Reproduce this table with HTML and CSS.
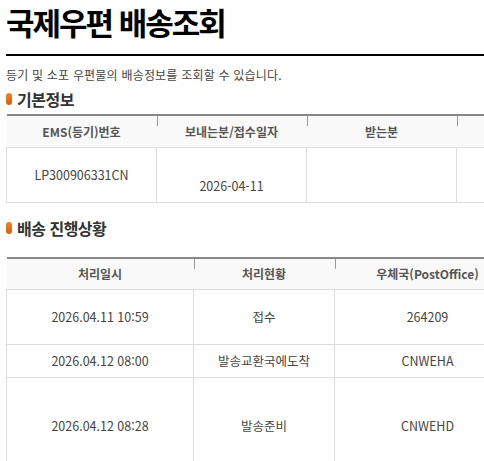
FILE: index.html
```html
<!DOCTYPE html>
<html lang="ko">
<head>
<meta charset="utf-8">
<title>국제우편 배송조회</title>
<link rel="stylesheet" href="styles.css">
</head>
<body>
<div class="page">
  <h1 class="title">국제우편 배송조회</h1>
  <p class="desc">등기 및 소포 우편물의 배송정보를 조회할 수 있습니다.</p>

  <h2 class="sec"><span class="pill"></span>기본정보</h2>
  <table class="grid basic">
    <colgroup><col class="b1"><col class="b2"><col class="b3"><col class="b4"></colgroup>
    <thead>
      <tr><th>EMS(등기)번호</th><th>보내는분/접수일자</th><th>받는분</th><th></th></tr>
    </thead>
    <tbody>
      <tr class="r-basic"><td>LP300906331CN</td><td><br>2026-04-11</td><td></td><td></td></tr>
    </tbody>
  </table>

  <h2 class="sec sec2"><span class="pill"></span>배송 진행상황</h2>
  <table class="grid progress">
    <colgroup><col class="p1"><col class="p2"><col class="p3"><col class="p4"></colgroup>
    <thead>
      <tr><th>처리일시</th><th>처리현황</th><th>우체국(PostOffice)</th><th></th></tr>
    </thead>
    <tbody>
      <tr class="r-a"><td>2026.04.11 10:59</td><td>접수</td><td>264209</td><td></td></tr>
      <tr class="r-b"><td>2026.04.12 08:00</td><td>발송교환국에도착</td><td>CNWEHA</td><td></td></tr>
      <tr class="r-c"><td>2026.04.12 08:28</td><td>발송준비</td><td>CNWEHD</td><td></td></tr>
    </tbody>
  </table>
</div>
</body>
</html>
```

FILE: styles.css
```css
* { box-sizing: border-box; }
html, body { margin: 0; padding: 0; background: #fff; }
body {
  font-family: "Noto Sans CJK KR", "Noto Sans", sans-serif;
  color: #444;
  overflow: hidden;
}
.page {
  padding-left: 6px;
  width: 484px;
  height: 461px;
  overflow: hidden;
}
.title {
  margin: 0;
  font-size: 31px;
  line-height: 44px;
  letter-spacing: -2px;
  font-weight: 700;
  color: #000;
  padding: 0 0 10px 0;
  border-bottom: 2px solid #000;
  width: 478px;
}
.desc {
  margin: 10px 0 0 0;
  font-size: 12px;
  line-height: 18px;
  letter-spacing: 0.2px;
  color: #444;
}
.sec {
  margin: 4px 0 4px 0;
  font-size: 16px;
  line-height: 22px;
  letter-spacing: -0.5px;
  font-weight: 700;
  color: #333;
  display: flex;
  align-items: center;
  gap: 5px;
}
.sec2 { margin: 14px 0 18px 0; }
.pill {
  display: inline-block;
  width: 6px;
  height: 12px;
  border-radius: 3px;
  background: linear-gradient(#f3832a, #dd5c05);
}
.grid {
  border-collapse: collapse;
  table-layout: fixed;
  border-top: 2px solid #888;
  font-size: 12.5px;
}
.grid th {
  height: 32px;
  padding: 0;
  background: #f9f9f9;
  font-size: 12px;
  font-weight: 700;
  color: #555;
  text-align: center;
  border-bottom: 1px solid #ddd;
}
.grid th + th {
  background: linear-gradient(#999, #999) left top / 1px 10px no-repeat, #f9f9f9;
}
.grid td {
  padding: 0;
  text-align: center;
  vertical-align: middle;
  border: 1px solid #ddd;
  line-height: 22px;
  color: #444;
}
.basic { width: 600px; }
.b1, .b2, .b3, .b4 { width: 150px; }
.progress { width: 700px; }
.p1 { width: 187px; }
.p2 { width: 141px; }
.p3 { width: 186px; }
.p4 { width: 186px; }
.r-basic td { height: 55px; }
.r-a td { height: 55px; }
.r-b td { height: 33px; }
.r-c td { height: 96px; }
```
